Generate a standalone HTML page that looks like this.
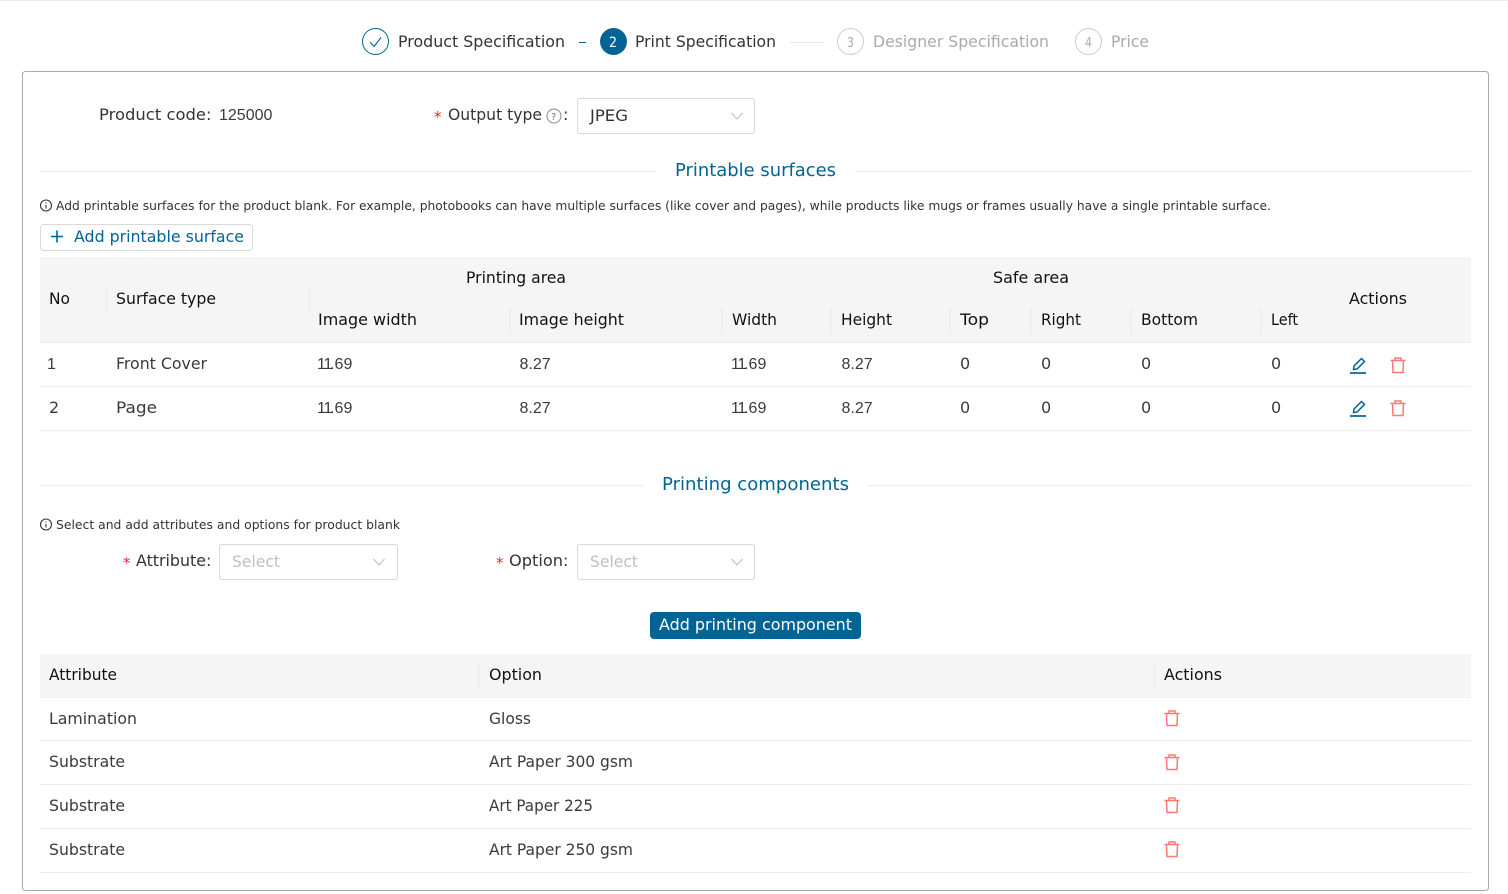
<!DOCTYPE html>
<html><head><meta charset="utf-8"><title>Print Specification</title>
<style>
html,body{margin:0;padding:0;background:#fff;width:1508px;height:894px;overflow:hidden}
svg{display:block}
text{font-family:"DejaVu Sans","Liberation Sans",sans-serif;font-size:16px;fill:#333;white-space:pre}
.h{fill:#111}
.d{fill:#3a3a3a}
.g{fill:#aaa}
.b{fill:#006494}
.s{font-size:12.5px;fill:#333}
.r{fill:#f5222d;font-size:15px}
.ph{fill:#bfbfbf}
.n{font-family:"Liberation Sans",sans-serif;font-size:16px;fill:#3a3a3a}
.ln{stroke:#eee;stroke-width:1}
.sep{stroke:#e8e8e8;stroke-width:1}
</style></head><body>
<svg width="1508" height="894" viewBox="0 0 1508 894" xmlns="http://www.w3.org/2000/svg">
<defs>
<g id="tr" fill="none" stroke="#ff7875" stroke-width="1.500"><path d="M-7.500 -5H7.500M-5.500 -5L-5 7H5L5.500 -5M-3 -5V-7.500H3V-5"/></g>
<g id="ed" fill="none" stroke="#006494" stroke-width="1.500"><path d="M-8 8H8" stroke-width="1.700"/><path d="M-4.500 4.500L-4 1L3.500 -6.500L6.500 -3.500L-1 4Z"/></g>
<g id="in" fill="none" stroke="#333" stroke-width="1.100"><circle r="5.500"/><path d="M0 -0.500V3M0 -3V-2"/></g>
<g id="ch" fill="none" stroke="#bbb" stroke-width="1"><path d="M-5.500 -3L0 3L5.500 -3"/></g>
</defs>
<rect width="1508" height="1" fill="#eee"/>

<!-- steps -->
<circle cx="375.500" cy="41.500" r="13" fill="none" stroke="#006494"/>
<path d="M370 42l4 4.500 7-9" fill="none" stroke="#006494" stroke-width="1.100"/>
<text x="398" y="47" textLength="167" lengthAdjust="spacingAndGlyphs">Product Specification</text>
<rect x="579" y="42" width="7" height="1" fill="#006494"/>
<circle cx="613.500" cy="41.500" r="13.500" fill="#006494"/>
<text x="609" y="47" textLength="8" lengthAdjust="spacingAndGlyphs" style="fill:#fff;font-size:14px">2</text>
<text x="635" y="47" textLength="141" lengthAdjust="spacingAndGlyphs">Print Specification</text>
<rect x="790" y="42" width="34" height="1" fill="#e8e8e8"/>
<circle cx="850.500" cy="41.500" r="13" fill="none" stroke="#ccc"/>
<text x="847" y="47" textLength="7" lengthAdjust="spacingAndGlyphs" class="g" style="font-size:13px">3</text>
<text x="873" y="47" textLength="176" lengthAdjust="spacingAndGlyphs" class="g">Designer Specification</text>
<circle cx="1088.500" cy="41.500" r="13" fill="none" stroke="#ccc"/>
<text x="1085" y="47" textLength="7" lengthAdjust="spacingAndGlyphs" class="g" style="font-size:13px">4</text>
<text x="1111" y="47" textLength="38" lengthAdjust="spacingAndGlyphs" class="g">Price</text>

<!-- card -->
<rect x="22.500" y="71.500" width="1466" height="819" rx="3" fill="#fff" stroke="#aaa"/>

<text x="99" y="120" textLength="107" lengthAdjust="spacingAndGlyphs">Product code</text>
<text x="206" y="120">:</text>
<text class="n" x="219" y="120">125000</text>
<text x="434" y="122" class="r">*</text>
<text x="448" y="120" textLength="94" lengthAdjust="spacingAndGlyphs">Output type</text>
<circle cx="554" cy="116" r="7" fill="none" stroke="#888"/>
<text x="551" y="120" style="font-size:10px;fill:#777">?</text>
<text x="563" y="120">:</text>
<rect x="577.500" y="98.500" width="177" height="35" rx="2" fill="#fff" stroke="#d9d9d9"/>
<text x="590" y="121" textLength="38" lengthAdjust="spacingAndGlyphs">JPEG</text>
<use href="#ch" x="737" y="116"/>

<!-- Printable surfaces -->
<line x1="40" x2="656" y1="171.500" y2="171.500" class="ln"/>
<line x1="855" x2="1471" y1="171.500" y2="171.500" class="ln"/>
<text x="675" y="176" textLength="161" lengthAdjust="spacingAndGlyphs" class="b" style="font-size:18px">Printable surfaces</text>
<use href="#in" x="46" y="205.500"/>
<text x="56" y="210" textLength="1215" lengthAdjust="spacingAndGlyphs" class="s">Add printable surfaces for the product blank. For example, photobooks can have multiple surfaces (like cover and pages), while products like mugs or frames usually have a single printable surface.</text>
<rect x="40.500" y="224.500" width="212" height="26" rx="3" fill="#fff" stroke="#d9d9d9"/>
<path d="M51 236.500H63M57 230.500V242.500" stroke="#006494" stroke-width="1.600" fill="none"/>
<text x="74" y="242" textLength="170" lengthAdjust="spacingAndGlyphs" class="b">Add printable surface</text>

<rect x="40" y="257" width="1431" height="85" fill="#f5f5f5"/>
<line x1="40" x2="1471" y1="342.500" y2="342.500" class="ln"/>
<line x1="107" x2="107" y1="286" y2="312" class="sep"/>
<line x1="309" x2="309" y1="286" y2="312" class="sep"/>
<line x1="510" x2="510" y1="308" y2="334" class="sep"/>
<line x1="722" x2="722" y1="308" y2="334" class="sep"/>
<line x1="831" x2="831" y1="308" y2="334" class="sep"/>
<line x1="950" x2="950" y1="308" y2="334" class="sep"/>
<line x1="1031" x2="1031" y1="308" y2="334" class="sep"/>
<line x1="1131" x2="1131" y1="308" y2="334" class="sep"/>
<line x1="1261" x2="1261" y1="308" y2="334" class="sep"/>

<text class="h" x="466" y="283" textLength="100" lengthAdjust="spacingAndGlyphs">Printing area</text>
<text class="h" x="993" y="283" textLength="76" lengthAdjust="spacingAndGlyphs">Safe area</text>
<text class="h" x="49" y="304" textLength="21" lengthAdjust="spacingAndGlyphs">No</text>
<text class="h" x="116" y="304" textLength="100" lengthAdjust="spacingAndGlyphs">Surface type</text>
<text class="h" x="1349" y="304" textLength="58" lengthAdjust="spacingAndGlyphs">Actions</text>
<text class="h" x="318" y="325" textLength="99" lengthAdjust="spacingAndGlyphs">Image width</text>
<text class="h" x="519" y="325" textLength="105" lengthAdjust="spacingAndGlyphs">Image height</text>
<text class="h" x="732" y="325" textLength="45" lengthAdjust="spacingAndGlyphs">Width</text>
<text class="h" x="841" y="325" textLength="51" lengthAdjust="spacingAndGlyphs">Height</text>
<text class="h" x="960" y="325" textLength="29" lengthAdjust="spacingAndGlyphs">Top</text>
<text class="h" x="1041" y="325" textLength="40" lengthAdjust="spacingAndGlyphs">Right</text>
<text class="h" x="1141" y="325" textLength="57" lengthAdjust="spacingAndGlyphs">Bottom</text>
<text class="h" x="1271" y="325" textLength="27" lengthAdjust="spacingAndGlyphs">Left</text>

<text class="n" x="47" y="369">1</text>
<text class="d" x="116" y="369" textLength="91" lengthAdjust="spacingAndGlyphs">Front Cover</text>
<text class="n" x="317 323.500 330 334.500 343.500" y="369">11.69</text>
<text class="n" x="519.500" y="369">8.27</text>
<text class="n" x="731 737.500 744 748.500 757.500" y="369">11.69</text>
<text class="n" x="841.500" y="369">8.27</text>
<text class="d" x="960" y="369">0</text><text class="d" x="1041" y="369">0</text><text class="d" x="1141" y="369">0</text><text class="d" x="1271" y="369">0</text>
<use href="#ed" x="1358" y="365"/><use href="#tr" x="1398" y="365.500"/>
<line x1="40" x2="1471" y1="386.500" y2="386.500" class="ln"/>

<text class="d" x="49" y="413">2</text>
<text class="d" x="116" y="413" textLength="41" lengthAdjust="spacingAndGlyphs">Page</text>
<text class="n" x="317 323.500 330 334.500 343.500" y="413">11.69</text>
<text class="n" x="519.500" y="413">8.27</text>
<text class="n" x="731 737.500 744 748.500 757.500" y="413">11.69</text>
<text class="n" x="841.500" y="413">8.27</text>
<text class="d" x="960" y="413">0</text><text class="d" x="1041" y="413">0</text><text class="d" x="1141" y="413">0</text><text class="d" x="1271" y="413">0</text>
<use href="#ed" x="1358" y="408"/><use href="#tr" x="1398" y="408.500"/>
<line x1="40" x2="1471" y1="430.500" y2="430.500" class="ln"/>

<!-- Printing components -->
<line x1="40" x2="643" y1="485.500" y2="485.500" class="ln"/>
<line x1="868" x2="1471" y1="485.500" y2="485.500" class="ln"/>
<text x="662" y="490" textLength="187" lengthAdjust="spacingAndGlyphs" class="b" style="font-size:18px">Printing components</text>
<use href="#in" x="46" y="524.500"/>
<text x="56" y="529" textLength="344" lengthAdjust="spacingAndGlyphs" class="s">Select and add attributes and options for product blank</text>

<text x="123" y="568" class="r">*</text>
<text x="136" y="566" textLength="70" lengthAdjust="spacingAndGlyphs">Attribute</text>
<text x="206" y="566">:</text>
<rect x="219.500" y="544.500" width="178" height="35" rx="2" fill="#fff" stroke="#d9d9d9"/>
<text x="232" y="567" textLength="48" lengthAdjust="spacingAndGlyphs" class="ph">Select</text>
<use href="#ch" x="379" y="562"/>

<text x="496" y="568" class="r">*</text>
<text x="509" y="566" textLength="54" lengthAdjust="spacingAndGlyphs">Option</text>
<text x="563" y="566">:</text>
<rect x="577.500" y="544.500" width="177" height="35" rx="2" fill="#fff" stroke="#d9d9d9"/>
<text x="590" y="567" textLength="48" lengthAdjust="spacingAndGlyphs" class="ph">Select</text>
<use href="#ch" x="737" y="562"/>

<rect x="650" y="612" width="211" height="27" rx="4" fill="#006494"/>
<text x="659" y="630" textLength="193" lengthAdjust="spacingAndGlyphs" style="fill:#fff">Add printing component</text>

<rect x="40" y="654" width="1431" height="43" fill="#f5f5f5"/>
<line x1="40" x2="1471" y1="697.500" y2="697.500" class="ln"/>
<line x1="479" x2="479" y1="662" y2="688" class="sep"/>
<line x1="1155" x2="1155" y1="662" y2="688" class="sep"/>
<text class="h" x="49" y="680" textLength="68" lengthAdjust="spacingAndGlyphs">Attribute</text>
<text class="h" x="489" y="680" textLength="53" lengthAdjust="spacingAndGlyphs">Option</text>
<text class="h" x="1164" y="680" textLength="58" lengthAdjust="spacingAndGlyphs">Actions</text>

<text class="d" x="49" y="724" textLength="88" lengthAdjust="spacingAndGlyphs">Lamination</text>
<text class="d" x="489" y="724" textLength="42" lengthAdjust="spacingAndGlyphs">Gloss</text>
<use href="#tr" x="1172" y="718.500"/>
<line x1="40" x2="1471" y1="740.500" y2="740.500" class="ln"/>
<text class="d" x="49" y="767" textLength="76" lengthAdjust="spacingAndGlyphs">Substrate</text>
<text class="d" x="489" y="767" textLength="144" lengthAdjust="spacingAndGlyphs">Art Paper 300 gsm</text>
<use href="#tr" x="1172" y="762.500"/>
<line x1="40" x2="1471" y1="784.500" y2="784.500" class="ln"/>
<text class="d" x="49" y="811" textLength="76" lengthAdjust="spacingAndGlyphs">Substrate</text>
<text class="d" x="489" y="811" textLength="104" lengthAdjust="spacingAndGlyphs">Art Paper 225</text>
<use href="#tr" x="1172" y="805.500"/>
<line x1="40" x2="1471" y1="828.500" y2="828.500" class="ln"/>
<text class="d" x="49" y="855" textLength="76" lengthAdjust="spacingAndGlyphs">Substrate</text>
<text class="d" x="489" y="855" textLength="144" lengthAdjust="spacingAndGlyphs">Art Paper 250 gsm</text>
<use href="#tr" x="1172" y="849.500"/>
<line x1="40" x2="1471" y1="872.500" y2="872.500" class="ln"/>
</svg>
</body></html>
